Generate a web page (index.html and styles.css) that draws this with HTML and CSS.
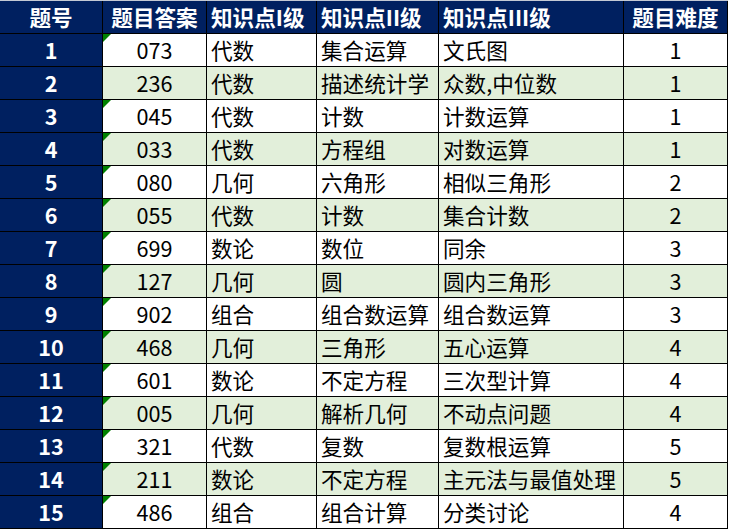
FILE: index.html
```html
<!DOCTYPE html>
<html lang="zh-CN">
<head>
<meta charset="utf-8">
<title>题目表</title>
<link rel="stylesheet" href="styles.css">
</head>
<body>
<div class="sheet">
  <div class="cell head">题号</div>
  <div class="cell head">题目答案</div>
  <div class="cell head left">知识点I级</div>
  <div class="cell head left">知识点II级</div>
  <div class="cell head left">知识点III级</div>
  <div class="cell head">题目难度</div>

  <div class="cell idx">1</div><div class="cell ans mark">073</div><div class="cell left">代数</div><div class="cell left">集合运算</div><div class="cell left">文氏图</div><div class="cell center">1</div>
  <div class="cell idx">2</div><div class="cell ans alt">236</div><div class="cell left alt">代数</div><div class="cell left alt">描述统计学</div><div class="cell left alt">众数,中位数</div><div class="cell center alt">1</div>
  <div class="cell idx">3</div><div class="cell ans mark">045</div><div class="cell left">代数</div><div class="cell left">计数</div><div class="cell left">计数运算</div><div class="cell center">1</div>
  <div class="cell idx">4</div><div class="cell ans alt mark">033</div><div class="cell left alt">代数</div><div class="cell left alt">方程组</div><div class="cell left alt">对数运算</div><div class="cell center alt">1</div>
  <div class="cell idx">5</div><div class="cell ans mark">080</div><div class="cell left">几何</div><div class="cell left">六角形</div><div class="cell left">相似三角形</div><div class="cell center">2</div>
  <div class="cell idx">6</div><div class="cell ans alt mark">055</div><div class="cell left alt">代数</div><div class="cell left alt">计数</div><div class="cell left alt">集合计数</div><div class="cell center alt">2</div>
  <div class="cell idx">7</div><div class="cell ans mark">699</div><div class="cell left">数论</div><div class="cell left">数位</div><div class="cell left">同余</div><div class="cell center">3</div>
  <div class="cell idx">8</div><div class="cell ans alt mark">127</div><div class="cell left alt">几何</div><div class="cell left alt">圆</div><div class="cell left alt">圆内三角形</div><div class="cell center alt">3</div>
  <div class="cell idx">9</div><div class="cell ans mark">902</div><div class="cell left">组合</div><div class="cell left">组合数运算</div><div class="cell left">组合数运算</div><div class="cell center">3</div>
  <div class="cell idx">10</div><div class="cell ans alt mark">468</div><div class="cell left alt">几何</div><div class="cell left alt">三角形</div><div class="cell left alt">五心运算</div><div class="cell center alt">4</div>
  <div class="cell idx">11</div><div class="cell ans mark">601</div><div class="cell left">数论</div><div class="cell left">不定方程</div><div class="cell left">三次型计算</div><div class="cell center">4</div>
  <div class="cell idx">12</div><div class="cell ans alt mark">005</div><div class="cell left alt">几何</div><div class="cell left alt">解析几何</div><div class="cell left alt">不动点问题</div><div class="cell center alt">4</div>
  <div class="cell idx">13</div><div class="cell ans mark">321</div><div class="cell left">代数</div><div class="cell left">复数</div><div class="cell left">复数根运算</div><div class="cell center">5</div>
  <div class="cell idx">14</div><div class="cell ans alt mark">211</div><div class="cell left alt">数论</div><div class="cell left alt">不定方程</div><div class="cell left alt">主元法与最值处理</div><div class="cell center alt">5</div>
  <div class="cell idx">15</div><div class="cell ans mark">486</div><div class="cell left">组合</div><div class="cell left">组合计算</div><div class="cell left">分类讨论</div><div class="cell center">4</div>
</div>
</body>
</html>
```

FILE: styles.css
```css
html, body {
  margin: 0;
  padding: 0;
  background: #ffffff;
}

.sheet {
  display: grid;
  grid-template-columns: 102px 103px 109px 121px 184px 103px;
  grid-auto-rows: 32px;
  column-gap: 1px;
  row-gap: 1px;
  width: 728px;
  box-sizing: border-box;
  background: #000000;
  border-top: 1px solid #c4c9d4;
  padding: 0 1px 1px 0;
  font-family: "Noto Sans CJK SC", "Noto Sans", sans-serif;
  font-size: 21.6px;
  color: #000000;
}

.cell {
  display: flex;
  align-items: center;
  justify-content: center;
  background: #ffffff;
  white-space: nowrap;
  overflow: hidden;
  line-height: 1;
}

.head {
  background: #002060;
  color: #ffffff;
  font-weight: 700;
}

.idx {
  background: #002060;
  color: #ffffff;
  font-weight: 700;
}

.left {
  justify-content: flex-start;
  padding-left: 4px;
}

.alt {
  background: #e2efda;
}

.ans {
  position: relative;
}

.mark::before {
  content: "";
  position: absolute;
  left: 0;
  top: 0;
  width: 0;
  height: 0;
  border-top: 8px solid #008000;
  border-right: 8px solid transparent;
}
```
